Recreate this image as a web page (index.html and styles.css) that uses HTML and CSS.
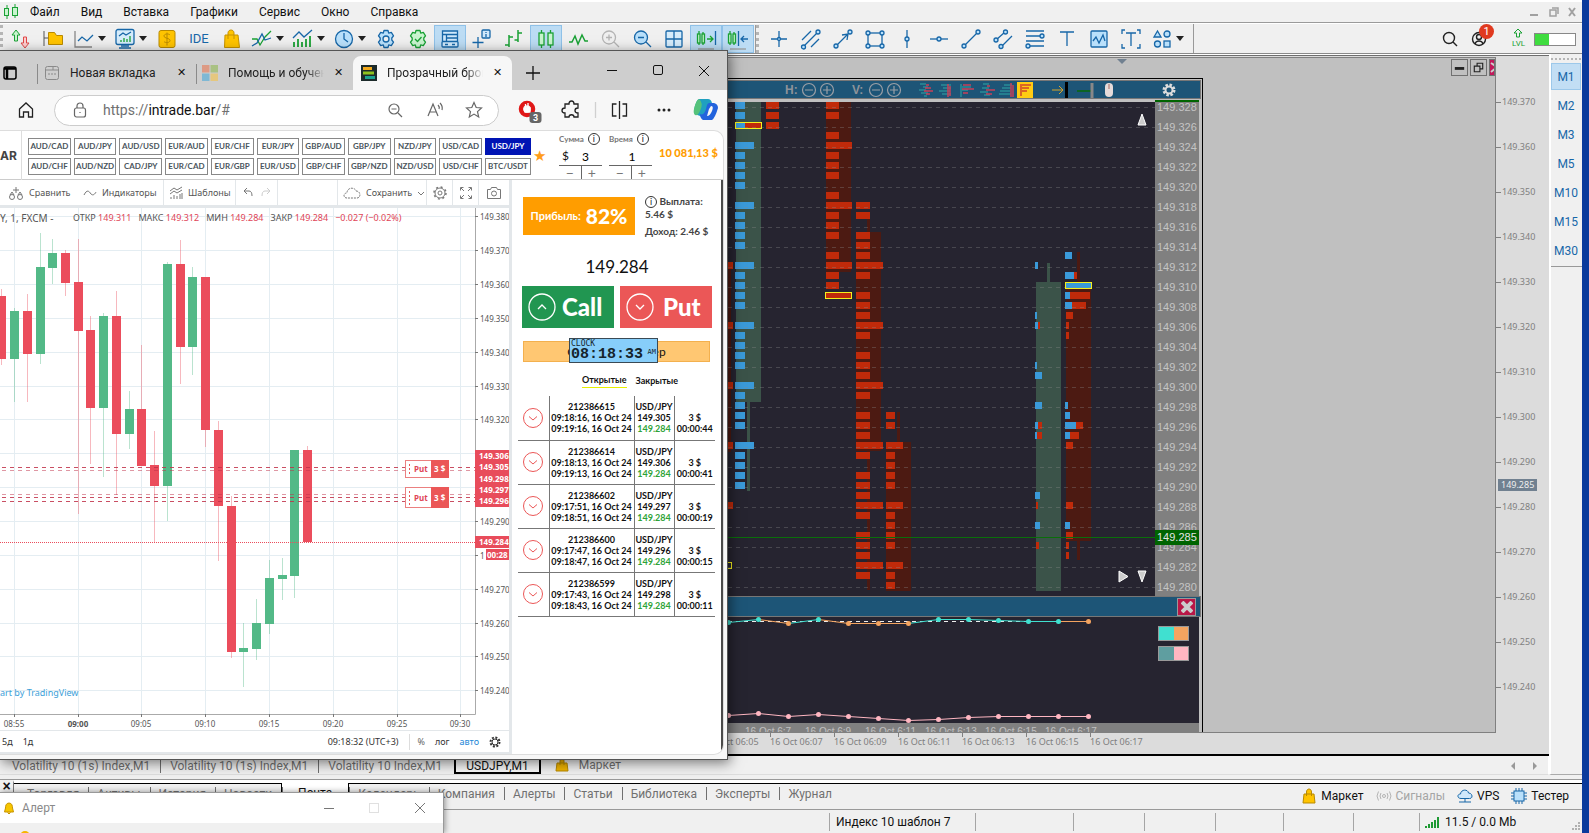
FILE: index.html
```html
<!DOCTYPE html>
<html lang="ru">
<head>
<meta charset="utf-8">
<title>USDJPY,M1</title>
<link rel="stylesheet" href="styles.css">
</head>
<body>
<div class="app">
  <header class="menubar">
    <svg class="menu-logo" width="16" height="16" viewBox="0 0 16 16" fill="#c9f5cf" stroke="#1aa135"><path d="M4 1v14M12 0v14"/><rect x="1.500" y="4.500" width="4" height="7"/><rect x="9.500" y="3.500" width="5" height="8"/></svg>
    <nav class="menu">
      <button>Файл</button><button>Вид</button><button>Вставка</button><button>Графики</button><button>Сервис</button><button>Окно</button><button>Справка</button>
    </nav>
    <div class="menu-controls">
      <svg width="52" height="12" viewBox="0 0 52 12" stroke="#a0a0a0" fill="none" stroke-width="2"><path d="M3 9h8M42 2l6 8M48 2l-6 8"/><path d="M23 4h6v6h-6zM25 2h6v6" stroke-width="1.500"/></svg>
    </div>
  </header>

  <div class="toolbar">
    <i class="grip"></i>
    <div class="tools">
      <button class="tool" aria-label="Ордер"><svg viewBox="0 0 24 24" fill="#c9f5cf" stroke="#1aa135"><path d="M5.500 14V8H3l4-5 4 5H8.500v6z"/><path d="M14.500 10v6H12l4 5 4-5h-2.500v-6z" fill="#ffd0d0" stroke="#e04848"/></svg></button>
      <button class="tool" aria-label="Каталог"><svg viewBox="0 0 24 24" fill="#ffc400" stroke="#b98a00"><path d="M3 4v15M3 11h4" stroke="#555"/><path d="M7.500 5.500h6l2 3h6v9h-14z"/></svg></button>
      <button class="tool drop" aria-label="Линия"><svg viewBox="0 0 24 24" fill="none" stroke="#1767a8" stroke-width="1.300"><path d="M3 4v16h17" stroke="#888"/><path d="M6 14l4-4 5 4 6-6"/></svg></button>
      <button class="tool drop" aria-label="График"><svg viewBox="0 0 24 24" fill="#d6ecfb" stroke="#1767a8" stroke-width="1.300"><rect x="3" y="2.500" width="18" height="15" rx="2"/><path d="M6 21h12M8 19h8M6 9l4-3 3 2 5-3" fill="none"/><path d="M8 15v-2M11 15v-4M14 15v-3M17 15v-6" stroke="#1aa135"/></svg></button>
      <button class="tool" aria-label="Депозит"><svg viewBox="0 0 24 24" fill="#ffc400" stroke="#b98a00"><rect x="4" y="3.500" width="16" height="17" rx="2"/><path d="M15 8c-1-1.500-6-1.500-6 1s6 2 6 4.500-5 2.500-6 1M12 5.500v13" fill="none"/></svg></button>
      <button class="tool ide">IDE</button>
      <button class="tool" aria-label="Маркет"><svg viewBox="0 0 24 24" fill="#ffc400" stroke="#c79300"><path d="M6 8h13l1.500 12.500h-15zM9 12V6c0-4 6-4 6 0v6" /></svg></button>
      <button class="tool drop" aria-label="Индикаторы"><svg viewBox="0 0 24 24" fill="none" stroke="#1767a8" stroke-width="1.300"><path d="M2 12h5l3 6 5-8 6-6" stroke="#1aa135"/><path d="M2 19l5-3 5-9 3 6 6-2"/></svg></button>
      <button class="tool drop" aria-label="Объемы"><svg viewBox="0 0 24 24" fill="none" stroke="#1767a8" stroke-width="1.300"><path d="M2 11l6-6 5 5 8-7"/><path d="M3 20v-5M7 20v-8M11 20v-5M15 20v-8M19 20V9" stroke="#1aa135" stroke-width="1.800"/></svg></button>
      <button class="tool drop" aria-label="Период"><svg viewBox="0 0 24 24" fill="#b9e0fb" stroke="#1767a8" stroke-width="1.300"><circle cx="12" cy="12" r="8.500"/><path d="M12 6v6l4 3" fill="none"/></svg></button>
      <button class="tool" aria-label="Настройки"><svg viewBox="0 0 24 24" fill="#b9e0fb" stroke="#1767a8" stroke-width="1.300" stroke-linejoin="round"><path d="M10 3.500h4l.7 2.600 2.600-.7 2.200 3.500L17.800 11v2l1.700 2.100-2.200 3.500-2.600-.7-.7 2.600h-4l-.7-2.600-2.600.7-2.200-3.500L6.200 13v-2L4.500 8.900l2.200-3.500 2.600.7z"/><circle cx="12" cy="12" r="3" fill="#f0f0f0"/></svg></button>
      <button class="tool" aria-label="Проверка"><svg viewBox="0 0 24 24" fill="#c9f5cf" stroke="#1aa135" stroke-width="1.300" stroke-linejoin="round"><path d="M10 3.500h4l.7 2.600 2.600-.7 2.200 3.500L17.800 11v2l1.700 2.100-2.200 3.500-2.600-.7-.7 2.600h-4l-.7-2.600-2.600.7-2.200-3.500L6.200 13v-2L4.500 8.900l2.200-3.500 2.600.7z"/><path d="M9 12l2.500 2.500 4-4.500" fill="none"/></svg></button>
      <button class="tool on" aria-label="Терминал"><svg viewBox="0 0 24 24" fill="#cfe8fb" stroke="#1767a8" stroke-width="1.300"><path d="M4.500 14V4h15v10M4.500 7.500h15M8.500 8v6M8.500 11h11"/><rect x="4" y="14.500" width="16" height="5.500" rx="1"/><path d="M7 17.500h3M14 17.500h3"/></svg></button>
      <button class="tool" aria-label="Окно данных"><svg viewBox="0 0 24 24" fill="none" stroke="#1767a8" stroke-width="1.300"><path d="M8 10v11M2.500 15.500h11"/><rect x="12" y="3" width="8" height="8" rx="1" fill="#cfe8fb"/><path d="M16 5v1M16 7v3"/></svg></button>
      <button class="tool" aria-label="Бары"><svg viewBox="0 0 24 24" fill="none" stroke="#1aa135" stroke-width="1.500"><path d="M7 8v12M3 18h4M7 10h4M16 3v12M12.500 13H16M16 6h4"/></svg></button>
      <button class="tool on" aria-label="Свечи"><svg viewBox="0 0 24 24" fill="#c9f5cf" stroke="#1aa135" stroke-width="1.300"><path d="M7.500 3v18M16.500 3v18"/><rect x="5" y="6" width="5" height="12"/><rect x="14" y="6" width="5" height="12"/></svg></button>
      <button class="tool" aria-label="Зигзаг"><svg viewBox="0 0 24 24" fill="none" stroke="#1aa135" stroke-width="1.500"><path d="M3 15h3l3-6 3 8 4-9 3 6h3"/></svg></button>
      <button class="tool" aria-label="Увеличить"><svg viewBox="0 0 24 24" fill="none" stroke="#b4b4b4" stroke-width="1.300"><circle cx="11" cy="10.500" r="6.500"/><path d="M16 15l5 5M8 10.500h6M11 7.500v6"/></svg></button>
      <button class="tool" aria-label="Уменьшить"><svg viewBox="0 0 24 24" fill="#b9e0fb" stroke="#1767a8" stroke-width="1.300"><circle cx="11" cy="10.500" r="6.500"/><path d="M16 15l5 5M8 10.500h6"/></svg></button>
      <button class="tool" aria-label="Плитка"><svg viewBox="0 0 24 24" fill="#d6ecfb" stroke="#1767a8" stroke-width="1.300"><rect x="4" y="4" width="16" height="16" rx="1"/><path d="M12 4v16M4 12h16"/></svg></button>
      <button class="tool on" aria-label="Автопрокрутка"><svg viewBox="0 0 24 24" fill="#c9f5cf" stroke="#1aa135" stroke-width="1.300"><path d="M5 4v14M9 5v13M13 12h6M16 9l3 3-3 3"/><rect x="3.500" y="7" width="2.500" height="9"/><rect x="8" y="7" width="2.500" height="9"/><path d="M21.500 4v14" stroke="#1767a8"/><path d="M4 22h16" stroke="#999"/></svg></button>
      <button class="tool on" aria-label="Сдвиг"><svg viewBox="0 0 24 24" fill="#c9f5cf" stroke="#1aa135" stroke-width="1.300"><path d="M4 4v14M8 5v13"/><rect x="2.500" y="7" width="2.500" height="9"/><rect x="7" y="7" width="2.500" height="9"/><path d="M12.500 4v15M15 12h7M18 9l-3 3 3 3" stroke="#1767a8" fill="none"/><path d="M4 22h16" stroke="#999"/></svg></button>
    </div>
    <i class="grip mid"></i>
    <div class="tools draw">
      <button class="tool" aria-label="Перекрестие"><svg viewBox="0 0 24 24"><path d="M12 4v16M4 12h16"/><circle cx="12" cy="12" r="1.500"/></svg></button>
      <button class="tool" aria-label="Каналы"><svg viewBox="0 0 24 24"><path d="M4 20L19 5M3 13l9-9M12 20l8-8"/><circle cx="19" cy="5" r="2"/><circle cx="4.500" cy="20" r="2"/></svg></button>
      <button class="tool" aria-label="Стрелка"><svg viewBox="0 0 24 24"><path d="M5 19L17 7M11 8l6-1-1 6" fill="none"/><circle cx="19" cy="5" r="2"/><circle cx="5" cy="19" r="2"/></svg></button>
      <button class="tool" aria-label="Прямоугольник"><svg viewBox="0 0 24 24"><rect x="5" y="6" width="14" height="13" fill="none"/><circle cx="5" cy="6" r="2"/><circle cx="19" cy="6" r="2"/><circle cx="5" cy="19" r="2"/><circle cx="19" cy="19" r="2"/></svg></button>
      <button class="tool" aria-label="Вертикаль"><svg viewBox="0 0 24 24"><path d="M12 3v18"/><circle cx="12" cy="12" r="2"/></svg></button>
      <button class="tool" aria-label="Горизонталь"><svg viewBox="0 0 24 24"><path d="M3 12h18"/><circle cx="12" cy="12" r="2"/></svg></button>
      <button class="tool" aria-label="Тренд"><svg viewBox="0 0 24 24"><path d="M5 19L19 5"/><circle cx="19" cy="5" r="2"/><circle cx="5" cy="19" r="2"/></svg></button>
      <button class="tool" aria-label="Канал"><svg viewBox="0 0 24 24"><path d="M5 13l9-8M10 20L21 9"/><circle cx="14.500" cy="5" r="2"/><circle cx="5" cy="13" r="2"/><circle cx="10" cy="19.500" r="2"/></svg></button>
      <button class="tool" aria-label="Фибоначчи"><svg viewBox="0 0 24 24"><path d="M3 4h18M3 9h18M3 14h18M3 19h18"/><circle cx="19" cy="9" r="2"/><circle cx="5" cy="19" r="2"/></svg></button>
      <button class="tool" aria-label="Текст"><svg viewBox="0 0 24 24"><path d="M5 5h14M12 5v14"/></svg></button>
      <button class="tool" aria-label="Волна"><svg viewBox="0 0 24 24"><rect x="4" y="4" width="16" height="16" rx="1"/><path d="M6 14l3-4 3 6 4-8 2 6" fill="none"/></svg></button>
      <button class="tool" aria-label="Метка"><svg viewBox="0 0 24 24"><path d="M7 6h10M12 6v13M3 7V3h3M21 7V3h-3M3 17v4h3M21 17v4h-3" fill="none"/></svg></button>
      <button class="tool drop" aria-label="Фигуры"><svg viewBox="0 0 24 24"><path d="M4 10l3.500-6 3.500 6z"/><circle cx="17" cy="7" r="3"/><circle cx="7.500" cy="17" r="3"/><rect x="14" y="14" width="6" height="6"/></svg></button>
    </div>
    <div class="tool-right">
      <svg width="110" height="26" viewBox="0 0 110 26" fill="none" stroke="#222" stroke-width="1.400"><circle cx="16" cy="12" r="5.500"/><path d="M20 16l4 4"/><circle cx="46" cy="13" r="6.500"/><circle cx="46" cy="11" r="2.500"/><path d="M42 18c1-4 7-4 8 0"/><path d="M83.500 11V7H81l4-4 4 4h-2.500v4z" stroke="#1aa135" stroke-width="1"/></svg>
      <span class="badge">1</span><span class="lvl">LVL</span><i class="level"></i>
    </div>
  </div>

  <main class="workspace">
    <section class="mdi">
      <div class="plot">
        <div class="panel">
          <div class="panel-head">
            <b>H:</b>
            <svg width="36" height="16" viewBox="0 0 36 16" fill="none" stroke="#9a9fa6" stroke-width="1.200"><circle cx="8" cy="8" r="6.500"/><circle cx="26" cy="8" r="6.500"/><path d="M4 8h8M22 8h8M26 4v8"/></svg>
            <b class="vlab">V:</b>
            <svg width="36" height="16" viewBox="0 0 36 16" fill="none" stroke="#9a9fa6" stroke-width="1.200"><circle cx="8" cy="8" r="6.500"/><circle cx="26" cy="8" r="6.500"/><path d="M4 8h8M22 8h8M26 4v8"/></svg>
            <svg class="modes" width="184" height="18" viewBox="0 0 184 18" fill="none"><path d="M4 3h6M7 6h5M3 9h7M5 12h7M8 15h3M25 4h10M27 7h8M23 10h11M26 13h9M45 3v13M46 6h9M46 9h6M67 3h6M66 7h7M64 11h8M68 14h6M88 4h8M86 7h9M84 10h10M83 13h12" stroke="#2fa8a8"/><path d="M10 4h3M9 7h6M8 10h9M10 13h4M32 3v13M34 5v10M47 4h8M46 8h12M47 12h5M71 5h3M70 9h9M70 13h6M95 2v14M97 4v12" stroke="#c8405a" stroke-width="1.500"/><rect x="101" y="1" width="16" height="16" fill="#ffcc12"/><path d="M105 3v12M106 4h9M106 7h7M106 10h5" stroke="#d1442a" stroke-width="1.500"/><path d="M136 9h11M143 5l4 4-4 4" stroke="#d6a52a"/><path d="M150.500 1v16" stroke="#000" stroke-width="3"/><path d="M161 10h14" stroke="#0c6424" stroke-width="2"/><path d="M176 2v15" stroke="#888" stroke-width="3"/></svg>
            <svg width="10" height="16" viewBox="0 0 10 16"><rect x="1" y="1" width="8" height="14" rx="4" fill="#e6dcda"/><rect x="4" y="2" width="2" height="5" fill="#c8a29c"/></svg>
            <svg class="gear" width="14" height="14" viewBox="0 0 14 14"><circle cx="7" cy="7" r="5" fill="none" stroke="#ddd" stroke-width="3" stroke-dasharray="2.400 1.500"/><circle cx="7" cy="7" r="3.500" fill="none" stroke="#ddd" stroke-width="2"/></svg>
          </div>
          <div class="panel-main">
            <svg id="profile" width="1155" height="494" viewBox="0 102 1155 494"></svg>
            <ol class="ladder" id="ladder"></ol>
            <output class="now">149.285</output>
          </div>
          <div class="panel-head second"><button class="x" aria-label="Закрыть"><svg width="12" height="12" viewBox="0 0 12 12" stroke="#ccc" stroke-width="4"><path d="M1 1l10 10M11 1L1 11"/></svg></button></div>
          <div class="panel-sub">
            <svg id="delta" width="1155" height="106" viewBox="0 617 1155 106"></svg>
            <div class="swatches"><i class="sw1"></i><i class="sw2"></i></div>
          </div>
          <div class="panel-foot"><span>16 Oct 6:7</span><span>16 Oct 6:9</span><span>16 Oct 6:11</span><span>16 Oct 6:13</span><span>16 Oct 6:15</span><span>16 Oct 6:17</span></div>
        </div>
        <i class="shift"></i>
        <div class="mdi-buttons"><button aria-label="Свернуть"><svg viewBox="0 0 16 16" stroke="#222" stroke-width="3"><path d="M3 9h10"/></svg></button><button aria-label="Восстановить"><svg viewBox="0 0 16 16" stroke="#222" fill="none" stroke-width="1.200"><path d="M3.500 6.500h6v6h-6zM6.500 6V3.500h6v6H10"/></svg></button><button class="red" aria-label="Закрыть окно"><svg viewBox="0 0 4 15" stroke="#ccc" stroke-width="2" fill="none"><path d="M1 3l6 4-6 5"/></svg></button></div>
      </div>
      <ol class="prices"><li>149.370</li><li>149.360</li><li>149.350</li><li>149.340</li><li>149.330</li><li>149.320</li><li>149.310</li><li>149.300</li><li>149.290</li><li>149.280</li><li>149.270</li><li>149.260</li><li>149.250</li><li>149.240</li></ol>
      <output class="price-now">149.285</output>
      <ol class="times"><li>16 Oct 06:05</li><li>16 Oct 06:07</li><li>16 Oct 06:09</li><li>16 Oct 06:11</li><li>16 Oct 06:13</li><li>16 Oct 06:15</li><li>16 Oct 06:17</li></ol>
    </section>
    <nav class="chart-tabs">
      <button>Volatility 10 (1s) Index,M1</button><button>Volatility 10 (1s) Index,M1</button><button>Volatility 10 Index,M1</button><button class="active">USDJPY,M1</button>
      <button class="market"><svg width="14" height="14" viewBox="0 0 14 14" fill="#f0b400" stroke="#b98a00"><path d="M2 5h10l1 8H1zM5 7V3c0-3 4-3 4 0v4"/></svg>Маркет</button>
      <svg class="scroll" width="30" height="10" viewBox="0 0 30 10" fill="#999"><path d="M5 1v8L1 5zM23 1v8l4-4z"/></svg>
    </nav>
    <nav class="periods"><button class="active">M1</button><button>M2</button><button>M3</button><button>M5</button><button>M10</button><button>M15</button><button>M30</button></nav>
  </main>

  <section class="toolbox">
    <button class="tb-close" aria-label="Закрыть панель">×</button>
    <nav class="tb-tabs"><button>Торговля</button><button>Активы</button><button>История</button><button>Новости</button><button class="active">Почта</button><button>Календарь</button><button>Компания</button><button>Алерты</button><button>Статьи</button><button>Библиотека</button><button>Эксперты</button><button>Журнал</button></nav>
    <div class="services">
      <button><svg width="16" height="16" viewBox="0 0 16 16" fill="#ffc400" stroke="#b98a00"><path d="M3 6h10l1 9H2zM5.500 8V4c0-4 5-4 5 0v4"/></svg>Маркет</button>
      <button class="off"><svg width="16" height="16" viewBox="0 0 16 16" fill="none" stroke="#b4b4b4"><circle cx="8" cy="8" r="1.500"/><path d="M5 5q-2 3 0 6M11 5q2 3 0 6M2.500 3.500q-3 4.500 0 9M13.500 3.500q3 4.500 0 9"/></svg>Сигналы</button>
      <button><svg width="16" height="16" viewBox="0 0 16 16" fill="#cfe8fb" stroke="#1767a8"><path d="M4 10.500c-4 0-4-4.500-.5-4.500C4 1 11 1 11.500 5c4 0 5 5.500 1 5.500zM8 11v3M2 14h12"/></svg>VPS</button>
      <button><svg width="16" height="16" viewBox="0 0 16 16" fill="#b9e0fb" stroke="#1767a8"><rect x="3" y="3" width="10" height="10"/><path d="M5 0v3M8 0v3M11 0v3M5 13v3M8 13v3M11 13v3M0 5h3M0 8h3M0 11h3M13 5h3M13 8h3M13 11h3"/></svg>Тестер</button>
    </div>
  </section>

  <footer class="status">
    <span class="cell c1">Индекс 10 шаблон 7</span><span class="cell c2"></span><span class="cell c3"></span><span class="cell c4"></span><span class="cell c5"></span><span class="cell c6"></span><span class="cell c7"></span>
    <span class="cell c8"><svg width="14" height="12" viewBox="0 0 14 12" stroke="#1e9a34" stroke-width="2"><path d="M1 12v-2M4 12V8M7 12V6M10 12V4M13 12V1"/></svg>11.5 / 0.0 Mb</span>
    <svg class="size-grip" width="9" height="9" viewBox="0 0 9 9" fill="#b0b0b0"><path d="M7 0h2v2H7zM7 3h2v2H7zM7 6h2v2H7zM4 3h2v2H4zM4 6h2v2H4zM1 6h2v2H1z"/></svg>
  </footer>
</div>

<section class="browser">
  <div class="tabstrip">
    <svg class="panes" width="14" height="14" viewBox="0 0 14 14" fill="none" stroke="#000" stroke-width="1.500"><rect x="1" y="1" width="12" height="12" rx="2"/><path d="M1 2.500h12M4 3v10" stroke-width="2.500"/></svg>
    <div class="tab t1"><svg width="16" height="16" viewBox="0 0 16 16" fill="none" stroke="#8a8a8a"><rect x="1.500" y="1.500" width="13" height="13" rx="2"/><path d="M2 5h12M9 2v3M4 9h2M7 9h2M10 9h2"/></svg><span>Новая вкладка</span><button aria-label="Закрыть вкладку">✕</button></div>
    <div class="tab t2"><svg width="16" height="16" viewBox="0 0 16 16"><path d="M0 0h7.500v7.500H0z" fill="#dd9a84"/><path d="M8.500 0H16v7.500H8.500z" fill="#a9c183"/><path d="M0 8.500h7.500V16H0z" fill="#7fb8d4"/><path d="M8.500 8.500H16V16H8.500z" fill="#e5c77e"/></svg><span class="fade">Помощь и обучен</span><button aria-label="Закрыть вкладку">✕</button></div>
    <div class="tab t3"><svg width="16" height="16" viewBox="0 0 16 16"><path d="M0 0h16v16H0z" fill="#1d2b2b"/><path d="M2 2h9v3H2z" fill="#f2a91c"/><path d="M2 6.500h11v3H2z" fill="#8fc31f"/><path d="M4 11h10v3H4z" fill="#1ba38f"/></svg><span class="fade">Прозрачный брок</span><button aria-label="Закрыть вкладку">✕</button></div>
    <svg class="newtab" width="14" height="14" viewBox="0 0 14 14" stroke="#111" stroke-width="1.300"><path d="M0 7h14M7 0v14"/></svg>
    <svg class="win" width="104" height="14" viewBox="0 0 104 14" fill="none" stroke="#111"><path d="M1 6.500h10M93 2l10 10M103 2L93 12"/><rect x="47.500" y="1.500" width="9" height="9" rx="1.500"/></svg>
  </div>
  <div class="navbar">
    <svg class="home" width="16" height="16" viewBox="0 0 16 16" fill="none" stroke="#222" stroke-width="1.300"><path d="M1.500 7L8 1l6.500 6v8h-4v-5h-5v5h-4z"/></svg>
    <div class="address">
      <svg width="14" height="16" viewBox="0 0 14 16" fill="none" stroke="#666" stroke-width="1.200"><rect x="1.500" y="6" width="11" height="9" rx="2"/><path d="M4 6V4c0-4 6-4 6 0v2M7 10v1"/></svg>
      <span class="url">https://<b>intrade.bar</b>/#</span>
      <svg width="96" height="18" viewBox="0 0 96 18" fill="none" stroke="#666" stroke-width="1.200"><circle cx="7" cy="8" r="5"/><path d="M11 12l4 4M4.500 8h5"/><path d="M41 15l5-12 5 12M43 11h6M51 4q2 2 1 4M53 2q3 3 2 7"/><path d="M87 1.500l2.200 5 5.300.5-4 3.600 1.200 5.300-4.700-2.800-4.700 2.800 1.200-5.300-4-3.600 5.300-.5z"/></svg>
    </div>
    <svg class="ext" width="212" height="30" viewBox="0 0 212 30" fill="none" stroke="#222" stroke-width="1.300"><circle cx="15" cy="14" r="6" stroke="#e01818" stroke-width="4.500"/><path d="M12 14l6-1v4h-5zM13.500 9v5M16 8v5" fill="#fff" stroke="#fff"/><rect x="17.500" y="17" width="12" height="11" rx="3" fill="#666" stroke="none"/><text x="21" y="26" class="three">3</text><path d="M53 9h4c0-4 5-4 5 0h4v4c-4 0-4 5 0 5v4h-4c0-3-5-3-5 0h-4v-4c-4 0-4-5 0-5z"/><path d="M83.500 7v16" stroke="#d0d0d0"/><path d="M104.500 9h-4v12h4M110.500 9h4v12h-4M107.500 6v18"/><g fill="#222" stroke="none"><circle cx="147" cy="15" r="1.500"/><circle cx="152" cy="15" r="1.500"/><circle cx="157" cy="15" r="1.500"/></g><g stroke="none"><path d="M187 4h9q3 0 4 4l3 9q-8-3-10 4-3 1-5 0-6-2-6-6 2-10 5-11z" fill="#1fa0c0"/><path d="M187 4q5 4 1 12-2 5-5 4-2-2-1-6 2-9 5-10z" fill="#55c27a"/><path d="M197 8h5q4 1 4 5-3 10-6 12h-9q-3-2-3-6 4 2 6-5 1-6 3-6z" fill="#2263dd"/><path d="M199 11q3 0 1 5-2 5-5 5l2-7z" fill="#f7f7f7"/></g></svg>
  </div>

  <div class="page">
    <header class="site-head">
      <div class="logo">AR</div>
      <div class="pairs">
        <button>AUD/CAD</button><button>AUD/JPY</button><button>AUD/USD</button><button>EUR/AUD</button><button>EUR/CHF</button><button>EUR/JPY</button><button>GBP/AUD</button><button>GBP/JPY</button><button>NZD/JPY</button><button>USD/CAD</button><button class="active">USD/JPY</button>
        <button>AUD/CHF</button><button>AUD/NZD</button><button>CAD/JPY</button><button>EUR/CAD</button><button>EUR/GBP</button><button>EUR/USD</button><button>GBP/CHF</button><button>GBP/NZD</button><button>NZD/USD</button><button>USD/CHF</button><button>BTC/USDT</button>
      </div>
      <span class="star">★</span>
      <div class="stepper"><label for="sum">Сумма <i class="info">i</i></label><div class="field"><span>$</span><input id="sum" value="3"></div><div class="pm"><button>−</button><button>+</button></div></div>
      <div class="stepper"><label for="time">Время <i class="info">i</i></label><div class="field"><input id="time" value="1"></div><div class="pm"><button>−</button><button>+</button></div></div>
      <strong class="balance">10 081,13 $</strong>
    </header>
    <div class="page-body">
      <div class="tv">
        <div class="tv-bar">
          <button class="w1"><svg width="16" height="14" viewBox="0 0 16 14"><path d="M8 1v6M5 4h6M2 9l2-3 2 3M10 9l2-3 2 3"/><circle cx="4" cy="11" r="2.500"/><circle cx="12" cy="11" r="2.500"/></svg>Сравнить</button>
          <button class="w2"><svg width="14" height="14" viewBox="0 0 14 14"><path d="M1 9c3-6 5-4 7-1 2 2 4 0 5-2"/></svg>Индикаторы</button>
          <button class="w3"><svg width="14" height="14" viewBox="0 0 14 14"><path d="M1 5l4-3 3 2 5-3M1 8l4-3 3 2 5-3M2 13v-2M5 13V9M8 13v-3M11 13V8M13 13V7"/></svg>Шаблоны</button>
          <button class="w4" aria-label="Отменить"><svg width="30" height="12" viewBox="0 0 30 12"><path d="M5 1L2 4l3 3M2 4h5q3 0 3 5"/><path d="M25 1l3 3-3 3M28 4h-5q-3 0-3 5" stroke="#ccc"/></svg></button>
          <button class="w5"><svg width="18" height="14" viewBox="0 0 18 14" stroke-dasharray="2 1"><path d="M4 12c-4 0-4-5 0-5 0-6 8-6 9-2 5 0 5 7 1 7z"/></svg>Сохранить<svg width="8" height="8" viewBox="0 0 8 8"><path d="M1 3l3 3 3-3"/></svg></button>
          <button class="w6" aria-label="Свойства"><svg width="14" height="14" viewBox="0 0 14 14"><circle cx="7" cy="7" r="5"/><circle cx="7" cy="7" r="6" stroke-dasharray="2 2.700" stroke-width="1.500"/><circle cx="7" cy="7" r="2"/></svg></button>
          <button class="w6" aria-label="Полный экран"><svg width="14" height="14" viewBox="0 0 14 14"><path d="M1.500 4.500v-3h3M2 2l3 3M12.500 4.500v-3h-3M12 2L9 5M1.500 9.500v3h3M2 12l3-3M12.500 9.500v3h-3M12 12L9 9"/></svg></button>
          <button class="w7" aria-label="Снимок"><svg width="14" height="14" viewBox="0 0 14 14"><path d="M.500 3.500h3l1-2h5l1 2h3v9H.500z"/><circle cx="7" cy="7.500" r="2.500"/></svg></button>
        </div>
        <div class="tv-chart">
          <svg id="candles" width="509" height="523" viewBox="0 208 509 523"></svg>
          <div class="legend"><span class="sym">Y, 1, FXCM <i>-</i></span><span>ОТКР <em>149.311</em></span><span>МАКС <em>149.312</em></span><span>МИН <em>149.284</em></span><span>ЗАКР <em>149.284</em></span><em>−0.027 (−0.02%)</em></div>
          <a class="tvlink" href="#">art by TradingView</a>
        </div>
        <div class="tv-foot"><button>5д</button><button>1д</button><span class="utc">09:18:32 (UTC+3)</span><button class="pc">%</button><button>лог</button><button class="auto">авто</button><svg width="12" height="12" viewBox="0 0 12 12"><circle cx="6" cy="6" r="4.500" fill="none" stroke="#333" stroke-width="2" stroke-dasharray="2 1.500"/><circle cx="6" cy="6" r="3" fill="none" stroke="#333"/></svg></div>
      </div>
      <aside class="deal">
        <div class="deal-top">
          <div class="profit">Прибыль: <b>82%</b></div>
          <div class="payout"><p><i class="info">i</i> Выплата: 5.46 $</p><p>Доход: 2.46 $</p></div>
        </div>
        <div class="rate">149.284</div>
        <div class="deal-buttons">
          <button class="call"><svg width="28" height="28" viewBox="0 0 28 28" fill="none" stroke="#fff" stroke-width="1.300"><circle cx="14" cy="14" r="13"/><path d="M10 16l4-4 4 4"/></svg>Call</button>
          <button class="put"><svg width="28" height="28" viewBox="0 0 28 28" fill="none" stroke="#fff" stroke-width="1.300"><circle cx="14" cy="14" r="13"/><path d="M10 12l4 4 4-4"/></svg>Put</button>
        </div>
        <button class="timer">Обновить таймер</button>
        <nav class="deal-tabs"><button class="active">Открытые</button><button>Закрытые</button></nav>
        <table class="deals"><tbody id="deals"></tbody></table>
      </aside>
    </div>
  </div>
</section>

<section class="clock"><span>CLOCK</span><div><time>08:18:33</time><small>AM</small></div></section>

<section class="alert">
  <div class="alert-head">
    <svg width="10" height="13" viewBox="0 0 10 13" fill="#f7c600" stroke="#c79300"><path d="M5 1c3 0 3.500 3 3.500 5L9.500 10H.500L1.500 6c0-2 .5-5 3.500-5zM3.500 10.500q1.500 3 3 0"/></svg>
    <span>Алерт</span>
    <svg class="alert-win" width="104" height="14" viewBox="0 0 104 14" fill="none" stroke="#777"><path d="M1 7.500h10M92 2l10 10M102 2L92 12"/><rect x="46.500" y="2.500" width="9" height="9" stroke="#e0e0e0"/></svg>
  </div>
  <div class="alert-body"><i></i></div>
</section>
<script src="charts.js"></script>
</body>
</html>
```

FILE: styles.css
```css
* { box-sizing: border-box; }
html, body { height: 100%; margin: 0; }
body { background: #0a3a9c; padding-right: 7px; overflow: hidden; position: relative; font: 12px/16px Roboto, "Open Sans", sans-serif; color: #111; }
button { background: none; border: 0; padding: 0; margin: 0; font: inherit; color: inherit; white-space: nowrap; }
input { font: inherit; border: 0; padding: 0; background: none; }
ol { list-style: none; margin: 0; padding: 0; }
p { margin: 0; }
svg { display: block; flex: none; }
i, em { font-style: normal; }

.app { height: 100%; display: flex; flex-direction: column; background: #f0f0f0; }
.menubar { height: 23px; flex: none; border-top: 2px solid #fff; border-bottom: 1px solid #9a9a9a; display: flex; align-items: center; }
.menu-logo { margin-left: 3px; }
.menu { display: flex; gap: 21px; margin-left: 11px; }
.menu-controls { margin-left: auto; margin-right: 3px; }

.toolbar { height: 31px; flex: none; display: flex; align-items: center; border-top: 1px solid #fff; border-bottom: 1px solid #8a8a8a; }
.grip { width: 3px; height: 28px; margin-right: 2px; border-left: 3px dotted #b5b5b5; }
.grip.mid { margin: 0 4px 0 2px; box-shadow: -1px 0 0 #999; }
.tools { display: flex; }
.tool { width: 32px; height: 28px; display: flex; align-items: center; justify-content: center; border: 1px solid transparent; }
.tool svg { width: 24px; height: 24px; }
.tool.on { background: #bcdcf4; border-color: #8fc1e8; }
.tool.drop { width: 41px; justify-content: flex-start; padding-left: 2px; gap: 2px; }
.tool.drop::after { content: ""; border: 4px solid transparent; border-top: 5px solid #222; border-bottom: 0; }
.ide { color: #1767a8; font-size: 13px; }
.draw { border-right: 1px solid #999; height: 100%; align-items: center; padding-right: 5px; }
.draw svg { stroke: #1767a8; stroke-width: 1.3; fill: #b9e0fb; }
.tool-right { margin-left: auto; position: relative; display: flex; align-items: center; width: 149px; }
.badge { position: absolute; left: 46px; top: -2px; width: 15px; height: 15px; border-radius: 8px; background: #e0391f; color: #fff; text-align: center; font-size: 11px; line-height: 15px; }
.lvl { position: absolute; left: 79px; top: 13px; font-size: 8px; line-height: 10px; color: #1aa135; }
.level { position: absolute; left: 101px; top: 7px; width: 42px; height: 13px; border: 1px solid #888; background: linear-gradient(90deg, #3fdc3f 14px, #fff 14px); }

.workspace { flex: 1; min-height: 0; display: grid; grid-template: 1fr 19px / 1fr 33px; }
.mdi { position: relative; display: grid; grid-template: 1fr 21px / 1fr 53px; background: #dcdcdc; border-top: 1px solid #fff; border-bottom: 2px solid #000; box-shadow: inset 0 1px 0 #6e6e6e; padding-top: 2px; min-height: 0; }
.plot { position: relative; background: #c0c0c0; border: 1px solid #808080; border-left: 0; padding-top: 20px; display: flex; min-height: 0; }
.panel { width: 1203px; border: 1px solid #000; border-width: 1px 1px 0 0; padding: 1px 3px 0 0; display: flex; flex-direction: column; overflow: hidden; }
.panel-head { height: 19px; flex: none; background: #1d5577; border: 1px solid #777; border-left: 0; display: flex; align-items: center; padding-left: 785px; color: #8d939a; font: bold 12px/16px "Liberation Sans", sans-serif; margin-right: -2px; }
.panel-head b { width: 16px; }
.panel-head .vlab { margin-left: 15px; }
.modes { margin-left: 12px; margin-right: 4px; }
.gear { margin-left: 48px; }
.panel-main { position: relative; display: flex; height: 497px; flex: none; border-top: 3px solid #c0c0c0; background: #262430; }
.ladder { width: 44px; background: #808080; border-top: 2px solid #006400; font: 11px/20px "Liberation Sans", sans-serif; color: #c4c4c4; padding-left: 2px; overflow: hidden; margin-top: -2px; }
.ladder li { height: 20px; }
.ladder li:first-child { height: 15px; line-height: 11px; }
.now { position: absolute; left: 1155px; top: 428px; width: 44px; padding-left: 2px; background: #006400; color: #e4e4e4; font: 11px/15px "Liberation Sans", sans-serif; }
.second { height: 21px; justify-content: flex-end; padding: 0 4px 0 0; }
.x { width: 19px; height: 18px; background: #b81747; border: 1px solid #999; display: grid; place-items: center; }
.panel-sub { display: flex; height: 106px; flex: none; background: #262430; }
.swatches { display: grid; gap: 5px; align-content: start; padding: 9px 0 0 3px; }
.swatches i { width: 31px; height: 15px; border: 1px solid #999; }
.sw1 { background: linear-gradient(90deg, #40e0d0 50%, #f4a460 50%); }
.sw2 { background: linear-gradient(90deg, #5f9ea0 50%, #ffb6c1 50%); }
.panel-foot { flex: 1; min-height: 0; overflow: hidden; background: #808080; display: flex; padding: 3px 0 0 745px; font: 10px/11px "Liberation Sans", sans-serif; color: #c0c0c0; }
.panel-foot span { width: 60px; white-space: nowrap; flex: none; }
.shift { position: absolute; left: 1117px; top: 1px; border: 5px solid transparent; border-top-color: #708090; border-bottom: 0; }
.mdi-buttons { position: absolute; right: 0; top: 1px; display: flex; gap: 2px; }
.mdi-buttons button { width: 17px; height: 17px; border: 1px solid #707070; }
.mdi-buttons .red { width: 6px; background: #c2185b; }
.prices, .price-now, .times { font: 9px/10px "Noto Sans", sans-serif; color: #808080; }
.prices { padding-top: 40px; }
.prices li { height: 45px; display: flex; gap: 1px; }
.prices li::before { content: ""; width: 5px; height: 1px; margin-top: 5px; background: #808080; }
.price-now { position: absolute; right: 12px; top: 424px; width: 39px; padding-left: 3px; line-height: 12px; background: #708090; color: #eee; }
.times { display: flex; padding-left: 706px; overflow: hidden; grid-column: 1 / -1; }
.times li { width: 64px; flex: none; white-space: nowrap; background: linear-gradient(#808080, #808080) 0 0 / 1px 4px no-repeat; padding-top: 4px; }

.chart-tabs { display: flex; align-items: stretch; color: #707070; height: 19px; padding-left: 2px; border-right: 1px solid #fff; border-bottom: 1px solid #ddd; }
.chart-tabs button { padding: 0 10px; position: relative; line-height: 20px; }
.chart-tabs button + button:not(.active):not(.market)::before, .tb-tabs button + button::before { content: ""; position: absolute; left: 0; top: 4px; height: 13px; width: 1px; background: #707070; }
.chart-tabs .active { border: 2px solid #000; border-top: 0; background: #f7f7f7; color: #111; margin-left: 2px; }
.chart-tabs .market { display: flex; align-items: center; gap: 10px; padding-left: 14px; }
.scroll { margin: 5px 8px 0 auto; }
.periods { grid-area: 1 / 2 / 3 / 3; display: flex; flex-direction: column; gap: 2px; padding-top: 9px; border-left: 2px solid #fff; color: #1767a8; border-bottom: 1px solid #aaa; background: repeating-linear-gradient(90deg, #b5b5b5 0 2px, #f0f0f0 2px 4px) 0 4px / 30px 2px no-repeat, #f0f0f0; }
.periods button { height: 27px; border: 1px solid transparent; width: 30px; }
.periods .active { background: #c2def4; border-color: #9cc8ea; }
.periods::after { content: ""; height: 1px; background: #999; }

.toolbox { height: 31px; flex: none; margin-top: 4px; border-top: 1px solid #999; border-bottom: 1px solid #999; display: flex; }
.tb-close { width: 13px; font: bold 14px/12px "Liberation Sans", sans-serif; align-self: flex-start; }
.tb-tabs { flex: 1; display: flex; color: #707070; border-left: 1px solid #777; border-top: 3px solid #fff; box-shadow: inset 0 1px 0 #000; line-height: 20px; padding-left: 4px; }
.tb-tabs button { padding: 0 9px; position: relative; align-self: flex-start; height: 21px; }
.tb-tabs .active { background: #fff; color: #111; border: 1px solid #000; border-top: 0; padding: 0 16px; }
.services { display: flex; gap: 12px; align-items: center; padding-right: 13px; border-top: 3px solid #fff; box-shadow: inset 0 1px 0 #000; }
.services button { display: flex; align-items: center; gap: 4px; }
.services .off { color: #a5a5a5; }
.status { height: 23px; flex: none; display: flex; align-items: center; justify-content: flex-end; position: relative; }
.cell { height: 18px; border-left: 1px solid #a5a5a5; padding-left: 6px; display: flex; align-items: center; gap: 6px; flex: none; }
.c1 { width: 146px; } .c2 { width: 98px; } .c3, .c4 { width: 71px; } .c5 { width: 68px; } .c6 { width: 70px; } .c7 { width: 66px; } .c8 { width: 163px; padding-left: 5px; }
.size-grip { position: absolute; right: 2px; bottom: 2px; }

.browser { position: absolute; left: 0; top: 50px; width: 728px; height: 710px; background: #f7f7f7; border: 1px solid #555; border-left: 0; box-shadow: 2px 3px 12px rgba(0,0,0,.5); display: flex; flex-direction: column; }
.tabstrip { height: 39px; flex: none; background: #cecece; display: flex; align-items: flex-end; }
.panes { margin: 0 20px 10px 3px; }
.tab { height: 34px; display: flex; align-items: center; gap: 10px; padding: 0 10px 0 6px; }
.tab span { width: 98px; overflow: hidden; white-space: nowrap; color: #222; }
.tab button { font-size: 11px; margin-left: auto; }
.t1 { width: 159px; padding-left: 7px; background: linear-gradient(#8a8a8a, #8a8a8a) 0 8px / 1px 20px no-repeat; }
.t2 { width: 157px; background: linear-gradient(#8a8a8a, #8a8a8a) 0 8px / 1px 20px no-repeat; }
.t3 { width: 159px; padding-left: 8px; background: #f7f7f7; border-radius: 8px 8px 0 0; }
.fade { -webkit-mask-image: linear-gradient(90deg, #000 82%, transparent); mask-image: linear-gradient(90deg, #000 82%, transparent); }
.newtab { margin: 0 0 10px 14px; }
.win { margin: 0 17px 12px auto; }
.navbar { height: 40px; flex: none; display: flex; align-items: center; }
.home { margin: 0 20px 0 18px; }
.address { width: 445px; height: 31px; border: 1px solid #ccc; border-radius: 16px; background: #fff; display: flex; align-items: center; padding: 0 15px 0 18px; gap: 16px; }
.url { flex: 1; font-size: 14px; color: #707070; }
.url b { font-weight: normal; color: #111; }
.ext { margin-left: 13px; }
.three { font: bold 9px Roboto, sans-serif; fill: #fff; stroke: none; }
.page { flex: 1; min-height: 0; margin: 0 3px 4px 0; background: #fff; border: 1px solid #ddd; border-left: 0; border-radius: 0 10px 10px 0; overflow: hidden; display: flex; flex-direction: column; font-family: Lato, "Open Sans", sans-serif; }

.site-head { height: 49px; flex: none; border-bottom: 1px solid #ccc; display: flex; align-items: flex-start; }
.logo { width: 22px; height: 49px; border-right: 1px solid #ddd; font: bold 12px/50px Inter, sans-serif; color: #444; text-align: right; padding-right: 5px; }
.pairs { display: grid; grid-template-columns: repeat(10, 1fr) 46px; gap: 3px; width: 503px; margin: 7px 0 0 6px; }
.pairs button { height: 17px; border: 1px solid #888; font: bold 8px/13px Lato, sans-serif; color: #4a555c; text-align: center; }
.pairs .active { background: #0014b4; color: #fff; border-color: #0014b4; }
.star { color: #ff9d1a; font: 15px/20px "DejaVu Sans", sans-serif; margin: 15px 0 0 2px; width: 13px; }
.stepper { width: 43px; margin: 0 0 0 13px; font-size: 10px; line-height: 12px; color: #777; }
.stepper + .stepper { margin-left: 7px; }
.stepper label { display: flex; align-items: center; gap: 4px; height: 16px; font-size: 8px; white-space: nowrap; font-weight: bold; width: 43px; }
.info { display: inline-grid; place-items: center; width: 12px; height: 12px; border: 1px solid #333; border-radius: 6px; font: 9px/10px Lato, sans-serif; color: #222; flex: none; }
.field { display: flex; height: 18px; align-items: center; color: #111; font-size: 12px; padding-left: 3px; }
.field input { flex: 1; min-width: 0; width: 20px; text-align: center; font-size: 12px; }
.pm { display: grid; grid-template-columns: 1fr 1fr; border-top: 1px solid #666; font-size: 14px; line-height: 13px; height: 14px; }
.pm button + button { border-left: 1px solid #666; }
.balance { margin: 14px 0 0 7px; color: #ff9d00; font-size: 11px; white-space: nowrap; font-weight: 900; }
.page-body { flex: 1; min-height: 0; display: flex; }
.tv { width: 512px; border-right: 3px solid #e3e7ea; display: flex; flex-direction: column; color: #555; font-family: "Noto Sans", sans-serif; }
.tv-bar { height: 28px; flex: none; border-bottom: 3px solid #e3e7ea; display: flex; font-size: 9px; }
.tv-bar button { display: flex; align-items: center; gap: 5px; border-right: 1px solid #e3e7ea; }
.tv-bar svg { fill: none; stroke: #777; }
.tv-bar .w1 { width: 78px; padding-left: 8px; border-right: 0; }
.tv-bar .w2 { width: 86px; padding-left: 5px; }
.tv-bar .w3 { width: 72px; padding-left: 5px; }
.tv-bar .w4 { width: 42px; padding-left: 6px; margin-right: 59px; }
.tv-bar .w5 { width: 90px; padding-left: 5px; border-left: 1px solid #e3e7ea; }
.tv-bar .w6 { width: 26px; justify-content: center; }
.tv-bar .w7 { flex: 1; justify-content: center; border: 0; }
.tv-chart { position: relative; flex: 1; min-height: 0; }
.legend { position: absolute; left: 0; top: 2px; display: flex; gap: 7px; font-size: 9px; white-space: nowrap; line-height: 16px; }
.legend em { color: #e04557; }
.legend .sym { font-size: 10px; width: 66px; }
.tvlink { position: absolute; left: 0; bottom: 29px; color: #3ba0d8; font-size: 9px; text-decoration: none; }
.tv-foot { flex: none; height: 24px; border-top: 1px solid #e3e7ea; border-bottom: 2px solid #e3e7ea; display: flex; align-items: center; gap: 10px; padding: 0 8px 0 2px; font-size: 9px; color: #333; }
.utc { margin-left: auto; }
.pc { border-left: 1px solid #ddd; padding-left: 8px; color: #666; }
.auto { color: #1e88d8; }
.tick { font: 8px "Noto Sans", sans-serif; fill: #555; }
.tick.tag { fill: #fff; font-weight: bold; }
.tick.putt { fill: #e04557; font-weight: bold; }

.deal { flex: 1; min-width: 0; border-right: 2px solid #4a4a4a; padding: 17px 9px 0 6px; display: flex; flex-direction: column; font-family: Lato, sans-serif; color: #111; }
.deal-top { display: flex; padding-left: 5px; }
.profit { width: 112px; height: 38px; background: #ff9d00; color: #fff; font-weight: bold; font-size: 11px; display: flex; align-items: center; justify-content: center; gap: 5px; }
.profit b { font-size: 21px; font-weight: 900; }
.payout { margin: -2px 0 0 10px; font-size: 10px; line-height: 12px; height: 38px; color: #444; width: 64px; font-weight: bold; }
.payout p + p { margin-top: 5px; white-space: nowrap; }
.rate { text-align: center; font-size: 17px; line-height: 20px; margin: 22px 0 9px 4px; }
.deal-buttons { display: flex; gap: 6px; padding-left: 4px; }
.deal-buttons button { flex: 1; height: 42px; color: #fff; font-size: 24px; font-weight: 900; display: flex; align-items: center; padding-left: 6px; gap: 6px; }
.call { background: #219651; }
.deal-buttons .put { background: #eb5757; gap: 9px; }
.timer { height: 21px; margin: 13px 2px 0 5px; background: #ffc772; border: 1px solid #f3b04e; font-size: 12px; line-height: 18px; }
.deal-tabs { display: flex; justify-content: center; gap: 9px; margin: 10px 0 0 32px; width: 160px; font-size: 9px; font-weight: bold; line-height: 15px; align-self: flex-start; }
.deal-tabs .active { border-bottom: 1px solid #e8f000; }
.deals { border-collapse: collapse; width: 197px; margin-top: 8px; table-layout: fixed; font-size: 9px; line-height: 11px; font-weight: bold; }
.deals td { height: 44px; padding: 0; text-align: center; vertical-align: middle; border-bottom: 1px solid #777; white-space: nowrap; }
.deals td + td { border-left: 1px solid #777; }
.deals td:nth-child(1) { width: 31px; }
.deals td:nth-child(2) { width: 85px; }
.deals td:nth-child(3) { width: 40px; }
.deals td svg { margin: 0 auto; }
.deals td:last-child { padding-top: 11px; }
.deals em { color: #2fa338; }

.clock { position: absolute; left: 569px; top: 338px; width: 89px; height: 25px; background: #87cefa; border: 1px solid #3a4a55; font: 8px/9px "DejaVu Sans Mono", monospace; color: #15242c; padding: 0 1px; }
.clock > span { display: block; }
.clock div { display: flex; justify-content: space-between; }
.clock time { font: bold 15px/14px "Liberation Mono", monospace; }
.clock small { font-size: 7px; line-height: 8px; }

.alert { position: absolute; left: 0; bottom: 0; width: 444px; height: 41px; background: #f0f0f0; border-top: 1px solid #999; border-right: 1px solid #999; box-shadow: 1px 0 6px rgba(0,0,0,.4); overflow: hidden; color: #8a8a8a; }
.alert-head { height: 30px; background: #fff; display: flex; align-items: center; padding: 0 16px 0 4px; gap: 8px; }
.alert-win { margin-left: auto; }
.alert-body { padding: 8px 0 0 20px; }
.alert-body i { display: block; width: 10px; height: 10px; border-radius: 5px; background: #f7b500; }
```

FILE: charts.js
```js
const NS = 'http://www.w3.org/2000/svg';
function put(parent, tag, attrs, text) {
  const el = document.createElementNS(NS, tag);
  for (const key in attrs) el.setAttribute(key, attrs[key]);
  if (text !== undefined) el.textContent = text;
  parent.appendChild(el);
  return el;
}
const box = (svg, x, y, w, h, fill, extra) => put(svg, 'rect', Object.assign({ x, y, width: w, height: h, fill }, extra));

/* price ladder */
const ladder = document.getElementById('ladder');
for (let p = 328; p >= 280; p -= 2) {
  const li = document.createElement('li');
  li.textContent = '149.' + p;
  ladder.appendChild(li);
}

/* volume profile: one row per point, ten pixels high */
const profile = document.getElementById('profile');
const BLUE = '#3a9ad9', RED = '#c02a0a', GREEN = '#3b5349', DARK = '#4c1a12';
const row = k => 102 + k * 10;
[[728, 262, 3, 190, DARK], [736, 102, 25, 300, GREEN], [747, 402, 3, 89, GREEN],
 [826, 102, 25, 170, DARK], [867, 212, 3, 20, DARK], [856, 232, 25, 219, DARK], [867, 451, 3, 139, DARK],
 [897, 412, 3, 30, DARK], [886, 442, 25, 149, DARK],
 [1047, 263, 3, 19, GREEN], [1036, 282, 25, 309, GREEN],
 [1077, 252, 3, 30, DARK], [1066, 282, 25, 259, DARK], [1077, 541, 3, 19, DARK]
].forEach(r => box(profile, ...r));
const rows = (x, narrow, wide, fill, short, long) => {
  short.forEach(k => box(profile, x, row(k), narrow, 7, fill));
  long.forEach(k => box(profile, x, row(k), wide, 7, fill));
};
rows(735, 10, 19, BLUE, [0, 1, 2, 5, 6, 7, 8, 11, 12, 13, 14, 17, 18, 19, 20, 23, 24, 25, 26, 29, 30, 31, 32, 35, 36, 37, 38], [4, 10, 16, 22, 28, 34]);
rows(728, 5, 5, RED, [16, 22, 28, 34, 40], []);
rows(766, 13, 13, RED, [0, 1, 2], []);
rows(826, 13, 26, RED, [0, 1, 3, 5, 6, 7, 9, 11, 12, 13, 15, 17, 18], [4, 10, 16, 19]);
rows(856, 14, 27, RED, [10, 11, 13, 14, 15, 17, 19, 20, 21, 23, 25, 26, 27, 29, 31, 32, 33, 35, 37, 38, 39, 41, 43, 44, 45, 47], [16, 22, 28, 34, 40, 46]);
rows(886, 9, 17, RED, [31, 32, 35, 36, 37, 38, 41, 42, 43, 44, 47, 48], [34, 40, 46]);
[[745, 2, 16, RED],
 [1035, 16, 3, BLUE], [1035, 21, 2, BLUE], [1035, 22, 3, BLUE], [1038, 22, 2, RED], [1035, 26, 2, BLUE], [1035, 27, 7, BLUE], [1035, 30, 7, BLUE],
 [1035, 32, 3, BLUE], [1038, 32, 4, RED], [1035, 33, 2, BLUE], [1037, 33, 5, RED], [1035, 39, 5, BLUE], [1036, 40, 2, RED], [1035, 42, 5, BLUE], [1036, 44, 3, RED],
 [1065, 15, 7, BLUE], [1065, 17, 9, BLUE], [1074, 17, 3, RED], [1065, 18, 26, BLUE], [1065, 19, 5, BLUE], [1070, 19, 20, RED], [1065, 20, 7, BLUE], [1072, 20, 14, RED],
 [1066, 21, 7, RED], [1066, 22, 3, RED], [1066, 23, 3, RED], [1065, 30, 3, BLUE], [1065, 31, 5, BLUE], [1065, 32, 11, BLUE], [1076, 32, 7, RED],
 [1065, 33, 5, BLUE], [1070, 33, 9, RED], [1066, 34, 7, RED], [1066, 40, 7, RED], [1065, 42, 5, BLUE], [1066, 43, 7, RED], [1066, 44, 3, RED], [1066, 45, 3, RED]
].forEach(([x, k, w, fill]) => box(profile, x, row(k), w, 7, fill));
for (let y = 107; y < 596; y += 20) put(profile, 'path', { d: `M728 ${y + 0.5}H1155`, stroke: '#8a8a8a', 'stroke-opacity': 0.35, 'stroke-dasharray': '4 4' });
[[735.5, 2, 26], [825.5, 19, 26], [1065.5, 18, 26], [715.5, 46, 16]].forEach(([x, k, w]) =>
  box(profile, x, row(k) + 0.5, w, 6, 'none', { stroke: '#f5f01e' }));
put(profile, 'path', { d: 'M0 537.5H1155', stroke: '#0a6e0a' });
['M1142 114l4 11h-8z', 'M1119 571v11l9-5.500z', 'M1142 582l4-11h-8z'].forEach(d => put(profile, 'path', { d, fill: '#ccc', stroke: '#fff' }));

/* delta lines */
const delta = document.getElementById('delta');
const AQUA = '#40e0d0', SAND = '#f4a460', PINK = '#ffb6c1';
const top1 = [622, 619, 623, 619, 623, 623, 623, 619, 619, 620, 621, 621, 621];
const low1 = [715, 713, 716, 714, 716, 718, 720, 719, 717, 716, 716, 716, 716];
const tone = 'ASASSSAAAAAS', dots = 'AASASSSAAAAAS';
const pick = c => c === 'A' ? AQUA : SAND;
put(delta, 'path', { d: 'M728 621.500H1058', stroke: '#eee', 'stroke-dasharray': '4 4' });
top1.forEach((y, i) => {
  const x = 728.5 + i * 30;
  if (i < 12) {
    put(delta, 'path', { d: `M${x} ${y + 0.5}L${x + 30} ${top1[i + 1] + 0.5}`, stroke: pick(tone[i]) });
    put(delta, 'path', { d: `M${x} ${low1[i] + 0.5}L${x + 30} ${low1[i + 1] + 0.5}`, stroke: PINK });
  }
  put(delta, 'circle', { cx: x, cy: y + 0.5, r: 2.5, fill: pick(dots[i]) });
  put(delta, 'circle', { cx: x, cy: low1[i] + 0.5, r: 2.5, fill: PINK });
});

/* one-minute candles: direction, body top, body bottom, wick top, wick bottom */
const chart = document.getElementById('candles');
const xs = [14, 78, 141, 205, 269, 333, 397, 460];
const ys = [216, 250, 284, 318, 352, 386, 419, 453, 487, 521, 555, 589, 623, 656, 690];
xs.forEach(x => put(chart, 'path', { d: `M${x + 0.5} 208V714`, stroke: '#e4edf2' }));
ys.forEach(y => put(chart, 'path', { d: `M0 ${y + 0.5}H475`, stroke: '#e4edf2' }));
[['r', 296, 359, 289, 365], ['g', 311, 359, 308, 402], ['r', 311, 354, 294, 402], ['g', 267, 354, 233, 364], ['g', 253, 268, 239, 284],
 ['r', 253, 283, 250, 296], ['r', 282, 331, 239, 514], ['r', 330, 408, 316, 464], ['g', 316, 408, 313, 477], ['r', 316, 434, 291, 495],
 ['g', 409, 434, 391, 449], ['r', 409, 466, 345, 466], ['r', 465, 486, 431, 542], ['g', 264, 486, 262, 521], ['r', 264, 347, 240, 384],
 ['g', 277, 347, 267, 375], ['r', 277, 430, 277, 447], ['r', 430, 506, 421, 561], ['r', 506, 652, 496, 658], ['g', 648, 652, 623, 687],
 ['g', 623, 649, 599, 660], ['g', 578, 624, 560, 634], ['g', 575, 579, 558, 600], ['g', 450, 576, 450, 598], ['r', 450, 542, 446, 542]
].forEach(([c, t, b, wt, wb], i) => {
  const x = Math.round(1.3 + i * 12.74), fill = c === 'r' ? '#eb4d5c' : '#53b987';
  put(chart, 'path', { d: `M${x + 0.5} ${wt}V${wb}`, stroke: fill, 'stroke-opacity': 0.4 });
  box(chart, x - 4, t, 9, b - t, fill);
});
[467, 470, 494, 497, 501].forEach((y, i) => put(chart, 'path', { d: `M2 ${y + 0.5}H475`, stroke: '#c03048', 'stroke-opacity': i === 1 || i === 2 ? 0.5 : 0.85, 'stroke-dasharray': '4 4' }));
put(chart, 'path', { d: 'M0 542.500H475', stroke: '#eb4d5c', 'stroke-dasharray': '1 1' });
[[460, 17], [487, 20]].forEach(([y, h]) => {
  box(chart, 405.5, y + 0.5, 43, h, '#fff', { stroke: '#eb8080' });
  box(chart, 431, y, 18, h + 1, '#eb5757');
  put(chart, 'path', { d: `M409.500 ${y + 4}v${h - 6}`, stroke: '#eb5757', 'stroke-dasharray': '2 2' });
  put(chart, 'text', { x: 414, y: y + h / 2 + 3.5, class: 'tick putt' }, 'Put');
  put(chart, 'text', { x: 434, y: y + h / 2 + 3.5, class: 'tick tag' }, '3 $');
});
put(chart, 'path', { d: 'M475.500 208V714.500H0', stroke: '#aaa', fill: 'none' });
box(chart, 475, 450, 34, 57, '#e84c5b');
box(chart, 475, 536, 34, 12, '#e84c5b');
box(chart, 486, 549, 23, 11, '#e84c5b');
ys.forEach((y, i) => {
  if (y === 453 || y === 487) return;
  put(chart, 'path', { d: `M475 ${y + 0.5}h3`, stroke: '#777' });
  const label = y === 555 ? '1' : '149.' + (380 - i * 10);
  put(chart, 'text', { x: 480, y: y + 3.5, class: 'tick' }, label);
});
['306', '305', '298', '297', '296'].forEach((p, i) => put(chart, 'text', { x: 479, y: 459 + i * 11.3, class: 'tick tag' }, '149.' + p));
put(chart, 'text', { x: 479, y: 545, class: 'tick tag' }, '149.284');
put(chart, 'text', { x: 487, y: 557.5, class: 'tick tag' }, '00:28');
['08:55', '09:00', '09:05', '09:10', '09:15', '09:20', '09:25', '09:30'].forEach((t, i) => {
  put(chart, 'path', { d: `M${xs[i] + 0.5} 714v3`, stroke: '#777' });
  put(chart, 'text', { x: xs[i], y: 726.5, class: 'tick', 'text-anchor': 'middle', style: i === 1 ? 'font-weight:bold' : '' }, t);
});

/* open deals */
const deals = [
  ['212386615', '09:18:16', '09:19:16', '149.305', '44'],
  ['212386614', '09:18:13', '09:19:13', '149.306', '41'],
  ['212386602', '09:17:51', '09:18:51', '149.297', '19'],
  ['212386600', '09:17:47', '09:18:47', '149.296', '15'],
  ['212386599', '09:17:43', '09:18:43', '149.298', '11']
];
document.getElementById('deals').innerHTML = deals.map(([id, from, to, rate, left]) => `<tr>
<td><svg width="20" height="20" viewBox="0 0 20 20" fill="none" stroke="#eb5757"><circle cx="10" cy="10" r="9.500"/><path d="M6 8.500l4 3.500 4-3.500"/></svg></td>
<td>${id}<br>${from}, 16 Oct 24<br>${to}, 16 Oct 24</td>
<td>USD/JPY<br>${rate}<br><em>149.284</em></td>
<td>3 $<br>00:00:${left}</td></tr>`).join('');
```
